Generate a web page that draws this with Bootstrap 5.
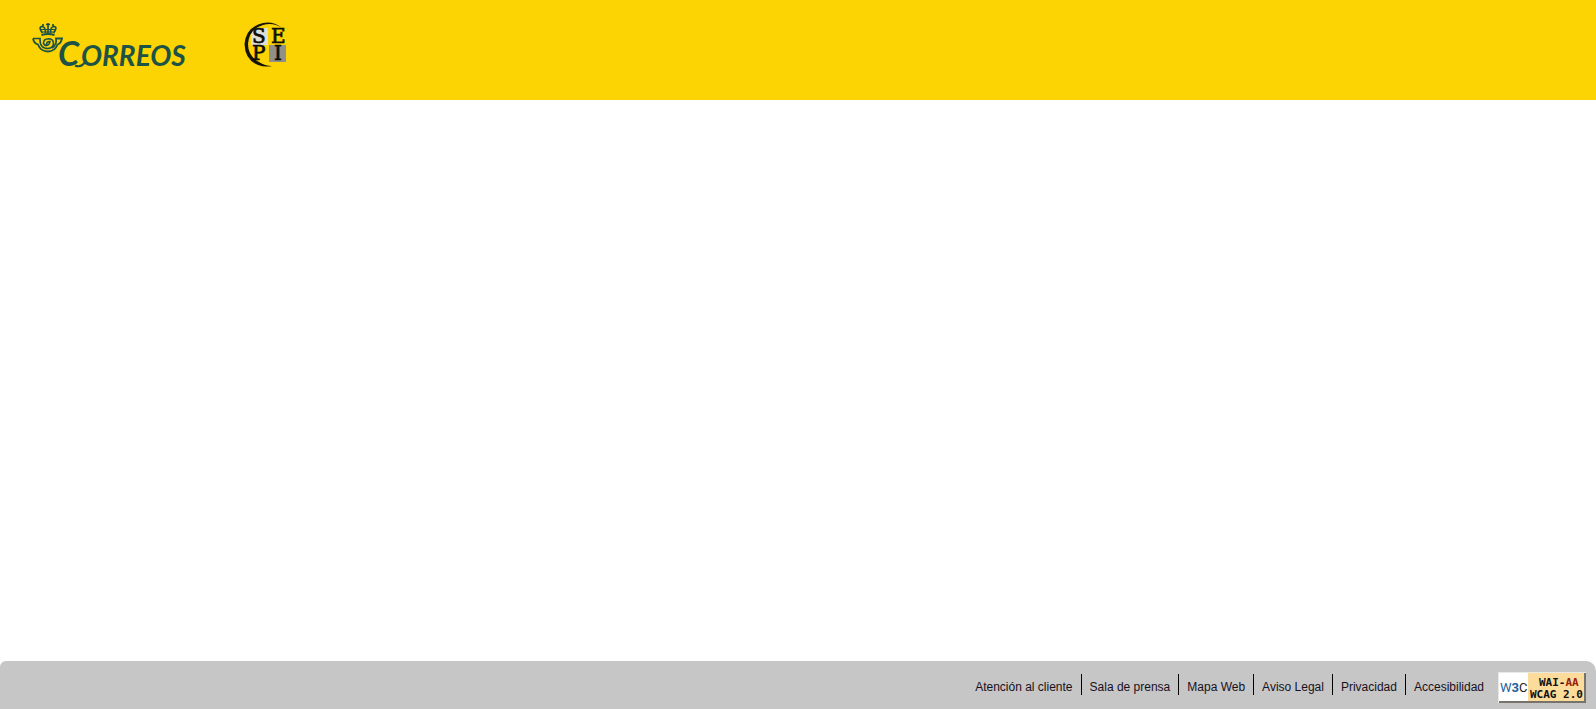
<!DOCTYPE html>
<html lang="es">
<head>
<meta charset="utf-8">
<meta name="viewport" content="width=device-width, initial-scale=1">
<title>Correos</title>
<link rel="stylesheet" href="https://cdn.jsdelivr.net/npm/bootstrap@5.3.0/dist/css/bootstrap.min.css">
<style>
body { font-family: "Liberation Sans", Arial, sans-serif; font-size: 12px; line-height: 20px; }
.site-header { background: #fcd303; min-height: 100px; padding: 20px 32px; gap: 52px; }
.site-header a, .conformance { line-height: 0; }
.site-header svg { overflow: visible; }
.site-footer { background: #c6c6c6; min-height: 48px; border-radius: 6px 10px 0 0; padding: 11px 10px 6px; gap: 14px; }
.footer-links { padding-top: 2px; }
.footer-links a { color: #18101c; padding: 3px 8px 0; }
.footer-links li { height: 21px; }
.footer-links li + li { border-left: 1px solid #000; }
.footer-links li:last-child a { padding-right: 0; }
.brand-word { font-family: Lato, sans-serif; font-style: italic; font-weight: 700; }
.sepi-word { font-family: "DejaVu Serif", serif; font-size: 20px; }
.wai-word { font-family: "DejaVu Sans Mono", monospace; font-weight: 700; font-size: 11px; }
.w3c-word { font-family: Roboto, sans-serif; font-size: 13px; }
</style>
</head>
<body class="d-flex flex-column min-vh-100 bg-white">
<header class="site-header d-flex align-items-start">
  <a href="#" aria-label="Correos">
    <svg width="160" height="54" viewBox="32 20 160 54" fill="none" stroke="#1c5346">
      <!-- crown -->
      <path d="M41.500 35Q48 33 54.500 35" stroke-width="2"/>
      <path d="M42.500 33Q38 27 42 26.500Q45.500 26.500 45.500 33M53.500 33Q58 27 54 26.500Q50.500 26.500 50.500 33M48 33V23M46 24.500H50M43 26V24M53 26V24" stroke-width="1.700"/>
      <path d="M40.500 29.500H55.500M41 32H55" stroke-width="1.200"/>
      <!-- post horn -->
      <path d="M33 38.500H40Q39.500 48.500 48 48.500Q53.500 48 53.500 43Q53 38.800 48.500 38.800Q43.500 39 43.500 43Q44 45.500 46.500 45.500Q49.500 45 50 41.500Q46.500 41 46.500 45" stroke-width="1.600"/>
      <path d="M33 38.500Q34 43.500 38 44.500Q40.500 51.500 48 51.500Q55 51.500 57.500 44.500Q61 43.500 62 38.500H56Q57 45 52 48" stroke-width="1.800"/>
      <g class="brand-word" fill="#1c5346" stroke="none">
        <text x="58" y="66" font-size="34">C</text>
        <text x="81" y="66" font-size="28">ORREOS</text>
      </g>
      <path d="M75 65.500Q82 68.500 86 60" stroke-width="2"/>
    </svg>
  </a>
  <a href="#" aria-label="SEPI">
    <svg width="46" height="54" viewBox="244 20 46 54">
      <path d="M251 28h17v17h-17z" fill="#deded6"/>
      <path d="M269 45h17v17h-17z" fill="#909088"/>
      <path d="M282 28Q273 21 263 23Q246 27 244.500 44Q245 60 258 65Q265 67.500 272 66Q265 66 259 62Q248 56 248 44Q249 29 263 25Q273 22 282 28Z" fill="#141408"/>
      <g class="sepi-word" fill="#0c0c08" stroke="#0c0c08" stroke-width=".7">
        <text x="252" y="43">S</text><text x="271" y="43">E</text>
        <text x="252" y="60">P</text><text x="274" y="60">I</text>
      </g>
    </svg>
  </a>
</header>
<main class="flex-grow-1"></main>
<footer class="site-footer d-flex justify-content-end align-items-start">
  <nav aria-label="Enlaces del pie">
    <ul class="footer-links list-unstyled d-flex flex-wrap mb-0">
      <li><a class="d-block text-decoration-none" href="#">Atención al cliente</a></li>
      <li><a class="d-block text-decoration-none" href="#">Sala de prensa</a></li>
      <li><a class="d-block text-decoration-none" href="#">Mapa Web</a></li>
      <li><a class="d-block text-decoration-none" href="#">Aviso Legal</a></li>
      <li><a class="d-block text-decoration-none" href="#">Privacidad</a></li>
      <li><a class="d-block text-decoration-none" href="#">Accesibilidad</a></li>
    </ul>
  </nav>
  <a class="conformance" href="#" aria-label="W3C WAI-AA WCAG 2.0">
    <svg width="88" height="31" viewBox="0 0 88 31">
      <path d="M0 0h88v31H0z" fill="#e8e8e4"/>
      <path d="M1 30H87V1" fill="none" stroke="#77726a" stroke-width="2"/>
      <path d="M1 1h29v28H1z" fill="#fff"/>
      <path d="M30 1h56v28H30z" fill="#fddb9a"/>
      <text class="w3c-word" x="2" y="20" fill="#1b6299">W<tspan font-weight="700">3</tspan><tspan fill="#222">C</tspan></text>
      <g class="wai-word" fill="#111"><text x="41" y="14">WAI-<tspan fill="#9a2008">AA</tspan></text><text x="32" y="26">WCAG 2.0</text></g>
    </svg>
  </a>
</footer>
<script src="https://cdn.jsdelivr.net/npm/bootstrap@5.3.0/dist/js/bootstrap.bundle.min.js"></script>
</body>
</html>
